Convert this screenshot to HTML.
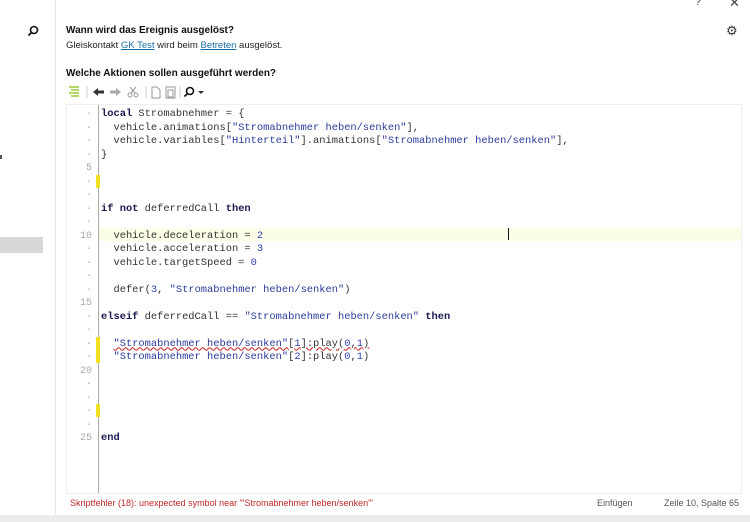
<!DOCTYPE html>
<html><head><meta charset="utf-8"><style>
*{margin:0;padding:0;box-sizing:border-box}
body{width:750px;height:522px;background:#fff;position:relative;overflow:hidden;font-family:"Liberation Sans",sans-serif}
.abs{position:absolute}
.h{font-weight:bold;font-size:10px;color:#111}
.t{font-size:9.5px;color:#222}
a{color:#1a6fa8;text-decoration:underline}
.code{position:absolute;left:101px;margin-top:2px;font-family:"Liberation Mono",monospace;font-size:10.4px;color:#333;white-space:pre;line-height:13.5px;height:13.5px}
.num{position:absolute;left:70px;margin-top:2px;width:22px;text-align:right;font-family:"Liberation Mono",monospace;font-size:10px;color:#aaa;line-height:13.5px}
.k{color:#1a1a50;font-weight:bold}
.s{color:#2a3a9a}
.n{color:#3040b0}
.y{position:absolute;left:96px;width:4px;background:#f0e020;margin-top:2px}
</style></head><body>
<div class="abs" style="left:55px;top:0;width:1px;height:515px;background:#e8e8e8"></div>
<div class="abs" style="left:0;top:237px;width:43px;height:16px;background:#d8d8d8"></div>
<div class="abs" style="left:0;top:155px;width:2px;height:4px;background:#555"></div>
<svg class="abs" style="left:27px;top:25px" width="12" height="12" viewBox="0 0 12 12"><circle cx="7" cy="5" r="3.5" fill="none" stroke="#111" stroke-width="1.6"/><path d="M4.5 7.5L1.5 10.5" stroke="#111" stroke-width="1.8"/></svg>
<div class="abs" style="left:695px;top:-4px;font-size:11px;color:#444">?</div>
<div class="abs" style="left:729px;top:-5px;font-size:13px;color:#444">✕</div>
<div class="abs" style="left:726px;top:23px;font-size:13px;color:#333">⚙</div>
<div class="abs h" style="left:66px;top:25px">Wann wird das Ereignis ausgelöst?</div>
<div class="abs t" style="left:66px;top:40px">Gleiskontakt <a>GK Test</a> wird beim <a>Betreten</a> ausgelöst.</div>
<div class="abs h" style="left:66px;top:68px">Welche Aktionen sollen ausgeführt werden?</div>
<svg class="abs" style="left:66px;top:84px" width="170" height="16" viewBox="0 0 170 16">
<g stroke="#9c3" stroke-width="1.5"><path d="M3 3h10M5 6h8M3 9h10M5 12h8"/></g>
<path d="M21 2v12M80 2v12M114 2v12" stroke="#ccc"/>
<path d="M27 8l5-4v2.5h6v3h-6V12z" fill="#333"/>
<path d="M55 8l-5-4v2.5h-6v3h6V12z" fill="#aaa"/>
<g fill="none" stroke="#999" stroke-width="1"><circle cx="64" cy="11" r="2"/><circle cx="70" cy="11" r="2"/><path d="M65 9l5-6M69 9l-5-6"/><path d="M86 3h5l3 3v8h-8z"/><path d="M100 3h9v11h-9z M102 6h5v7h-5z"/></g>
<circle cx="124" cy="7" r="3.5" fill="none" stroke="#111" stroke-width="1.6"/><path d="M121.5 9.5L118.5 12.5" stroke="#111" stroke-width="1.8"/>
<path d="M132 7h6l-3 3z" fill="#333"/></svg>
<div class="abs" style="left:66px;top:104px;width:676px;height:390px;border:1px solid #eee"></div>
<div class="abs" style="left:98px;top:105px;width:1px;height:388px;background:#aaa"></div>
<div class="abs" style="left:99px;top:228px;width:642px;height:13px;background:#fbfde6"></div>
<div class="abs" style="left:508px;top:228px;width:1px;height:12px;background:#111"></div>
<div class="y" style="top:173px;height:13px"></div>
<div class="y" style="top:335px;height:26px"></div>
<div class="y" style="top:402px;height:13px"></div>
<div class="num" style="top:106px">·<br>·<br>·<br>·<br>5<br>·<br>·<br>·<br>·<br>10<br>·<br>·<br>·<br>·<br>15<br>·<br>·<br>·<br>·<br>20<br>·<br>·<br>·<br>·<br>25</div>
<div class="code" style="top:106px"><span class="k">local</span> Stromabnehmer = {</div>
<div class="code" style="top:119.5px">  vehicle.animations[<span class="s">"Stromabnehmer heben/senken"</span>],</div>
<div class="code" style="top:133px">  vehicle.variables[<span class="s">"Hinterteil"</span>].animations[<span class="s">"Stromabnehmer heben/senken"</span>],</div>
<div class="code" style="top:146.5px">}</div>
<div class="code" style="top:200.5px"><span class="k">if not</span> deferredCall <span class="k">then</span></div>
<div class="code" style="top:227.5px">  vehicle.deceleration = <span class="n">2</span></div>
<div class="code" style="top:241px">  vehicle.acceleration = <span class="n">3</span></div>
<div class="code" style="top:254.5px">  vehicle.targetSpeed = <span class="n">0</span></div>
<div class="code" style="top:281.5px">  defer(<span class="n">3</span>, <span class="s">"Stromabnehmer heben/senken"</span>)</div>
<div class="code" style="top:308.5px"><span class="k">elseif</span> deferredCall == <span class="s">"Stromabnehmer heben/senken"</span> <span class="k">then</span></div>
<div class="code" style="top:335.5px">  <span style="text-decoration:underline wavy #c33"><span class="s">"Stromabnehmer heben/senken"</span>[<span class="n">1</span>]:play(<span class="n">0</span>,<span class="n">1</span>)</span></div>
<div class="code" style="top:349px">  <span class="s">"Stromabnehmer heben/senken"</span>[<span class="n">2</span>]:play(<span class="n">0</span>,<span class="n">1</span>)</div>
<div class="code" style="top:430px"><span class="k">end</span></div>
<div class="abs" style="left:70px;top:498px;font-size:9px;color:#c0282a">Skriptfehler (18): unexpected symbol near '"Stromabnehmer heben/senken"'</div>
<div class="abs" style="left:597px;top:498px;font-size:9px;color:#555">Einfügen</div>
<div class="abs" style="left:664px;top:498px;font-size:9px;color:#555">Zeile 10, Spalte 65</div>
<div class="abs" style="left:0;top:515px;width:750px;height:7px;background:#ececec"></div>
</body></html>
